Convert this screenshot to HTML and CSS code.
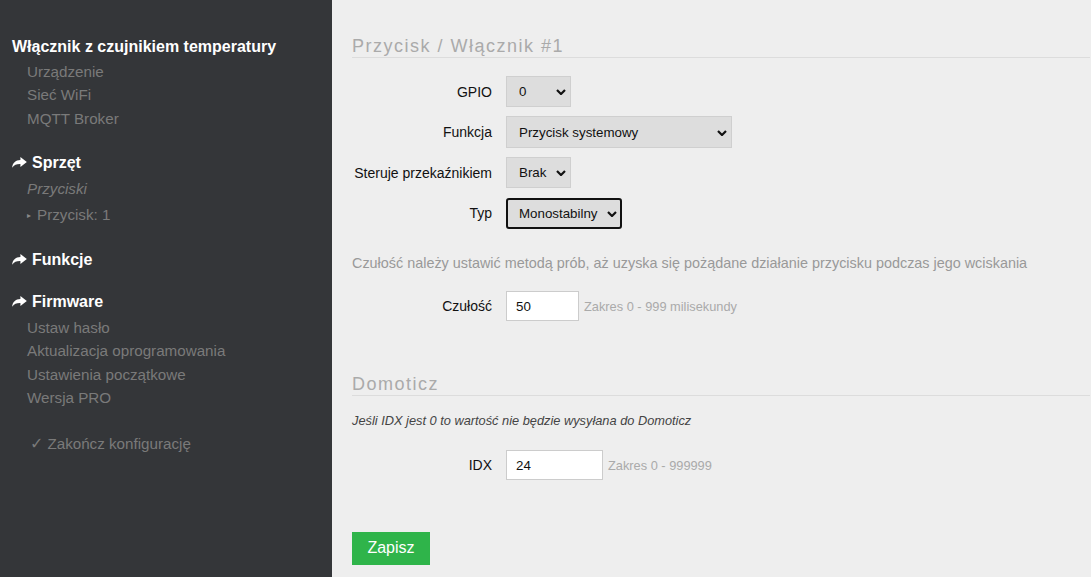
FILE: index.html
```html
<!DOCTYPE html>
<html lang="pl">
<head>
<meta charset="utf-8">
<title>Konfiguracja</title>
<link rel="stylesheet" href="styles.css">
</head>
<body>
<div class="layout">
  <nav class="sidebar">
    <div class="brand">Włącznik z czujnikiem temperatury</div>
    <ul class="items">
      <li>Urządzenie</li>
      <li>Sieć WiFi</li>
      <li>MQTT Broker</li>
    </ul>

    <div class="group"><svg class="ico" viewBox="0 0 16 12"><path d="M9 0 L16 5.5 L9 11 V7.6 C4.8 7.5 2.2 8.6 0 11.8 C0.3 6.6 3.6 3.6 9 3.4 Z" fill="#fff"/></svg>Sprzęt</div>
    <ul class="items">
      <li class="current">Przyciski</li>
      <li class="sub"><span class="tri">&#9656;</span>Przycisk: 1</li>
    </ul>

    <div class="group"><svg class="ico" viewBox="0 0 16 12"><path d="M9 0 L16 5.5 L9 11 V7.6 C4.8 7.5 2.2 8.6 0 11.8 C0.3 6.6 3.6 3.6 9 3.4 Z" fill="#fff"/></svg>Funkcje</div>

    <div class="group"><svg class="ico" viewBox="0 0 16 12"><path d="M9 0 L16 5.5 L9 11 V7.6 C4.8 7.5 2.2 8.6 0 11.8 C0.3 6.6 3.6 3.6 9 3.4 Z" fill="#fff"/></svg>Firmware</div>
    <ul class="items">
      <li>Ustaw hasło</li>
      <li>Aktualizacja oprogramowania</li>
      <li>Ustawienia początkowe</li>
      <li>Wersja PRO</li>
    </ul>

    <div class="finish"><span class="check">&#10003;</span>Zakończ konfigurację</div>
  </nav>

  <main class="content">
    <h2 class="section">Przycisk / Włącznik #1</h2>

    <div class="row first">
      <label class="lbl">GPIO</label>
      <span class="sel w65"><select><option>0</option></select><svg class="chev" viewBox="0 0 10 6"><path d="M1 1 L5 5 L9 1" fill="none" stroke="#111" stroke-width="2.2"/></svg></span>
    </div>
    <div class="row">
      <label class="lbl">Funkcja</label>
      <span class="sel w226"><select><option>Przycisk systemowy</option></select><svg class="chev" viewBox="0 0 10 6"><path d="M1 1 L5 5 L9 1" fill="none" stroke="#111" stroke-width="2.2"/></svg></span>
    </div>
    <div class="row">
      <label class="lbl">Steruje przekaźnikiem</label>
      <span class="sel w65"><select><option>Brak</option></select><svg class="chev" viewBox="0 0 10 6"><path d="M1 1 L5 5 L9 1" fill="none" stroke="#111" stroke-width="2.2"/></svg></span>
    </div>
    <div class="row">
      <label class="lbl">Typ</label>
      <span class="sel w116 focus"><select><option>Monostabilny</option></select><svg class="chev" viewBox="0 0 10 6"><path d="M1 1 L5 5 L9 1" fill="none" stroke="#111" stroke-width="2.2"/></svg></span>
    </div>

    <p class="note">Czułość należy ustawić metodą prób, aż uzyska się pożądane działanie przycisku podczas jego wciskania</p>

    <div class="row">
      <label class="lbl">Czułość</label>
      <input class="txt w73" type="text" value="50">
      <span class="hint">Zakres 0 - 999 milisekundy</span>
    </div>

    <h2 class="section second">Domoticz</h2>
    <p class="info">Jeśli IDX jest 0 to wartość nie będzie wysyłana do Domoticz</p>

    <div class="row">
      <label class="lbl">IDX</label>
      <input class="txt w97" type="text" value="24">
      <span class="hint">Zakres 0 - 999999</span>
    </div>

    <button class="save">Zapisz</button>
  </main>
</div>
</body>
</html>
```

FILE: styles.css
```css
* { box-sizing: border-box; }
html, body {
  margin: 0;
  padding: 0;
  height: 100%;
}
body {
  font-family: "Liberation Sans", Arial, sans-serif;
  background: #eeeeee;
  color: #222;
}
.layout {
  display: grid;
  grid-template-columns: 332px 1fr;
  min-height: 100%;
}
.sidebar {
  background: #343639;
  padding: 37px 0 0 12px;
}
.brand {
  color: #fff;
  font-weight: bold;
  font-size: 16px;
  line-height: 20px;
  margin-bottom: 3px;
}
.items {
  list-style: none;
  margin: 0;
  padding: 0 0 0 15px;
}
.items li {
  color: #7a7a7a;
  font-size: 15.2px;
  line-height: 23.33px;
}
.items li.current {
  font-style: italic;
}
.items li.sub {
  margin-top: 2px;
}
.tri {
  font-size: 8px;
  display: inline-block;
  width: 10px;
  vertical-align: 2px;
  color: #888;
}
.group {
  color: #fff;
  font-weight: bold;
  font-size: 16px;
  line-height: 20px;
  margin-top: 22px;
  margin-bottom: 4px;
  display: flex;
  align-items: center;
}
.items + .group { margin-top: 23.2px; }
.ico {
  width: 15px;
  height: 11px;
  margin-right: 5px;
  margin-top: -1px;
}
.finish {
  color: #7a7a7a;
  font-size: 15.2px;
  line-height: 23.33px;
  margin-top: 23px;
  padding-left: 18px;
}
.check {
  font-family: "DejaVu Sans", sans-serif;
  font-size: 16px;
  margin-right: 4px;
}

.content {
  padding: 35px 1px 10px 20px;
}
.section {
  margin: 0;
  font-weight: normal;
  font-size: 18px;
  line-height: 22px;
  letter-spacing: 1.5px;
  color: #aaaaaa;
  border-bottom: 1px solid #dcdcdc;
}
.section.second {
  margin-top: 51px;
}
.row {
  display: flex;
  align-items: center;
  height: 31px;
  margin-bottom: 9.5px;
}
.row.first { margin-top: 18px; }
.lbl {
  width: 140px;
  text-align: right;
  font-size: 14px;
  color: #111;
  margin-right: 14px;
}
.sel {
  position: relative;
  display: inline-block;
  height: 31px;
}
.sel select {
  appearance: none;
  -webkit-appearance: none;
  width: 100%;
  height: 100%;
  background: #dddddd;
  border: 1px solid #cfcfcf;
  border-radius: 0;
  font-family: "Liberation Sans", Arial, sans-serif;
  font-size: 13.333px;
  color: #111;
  padding: 0 0 0 12px;
  margin: 0;
}
.sel.focus select {
  border: 2px solid #111;
  border-radius: 3px;
  padding-left: 11px;
}
.chev {
  position: absolute;
  right: 5px;
  top: 13px;
  width: 10px;
  height: 6px;
  pointer-events: none;
}
.w65 { width: 65px; }
.w226 { width: 226px; height: 32px; }
.w226 .chev { top: 14px; }
.w116 { width: 116px; }
.note {
  margin: 24px 0 18px;
  font-size: 14.4px;
  line-height: 20px;
  color: #999999;
}
.txt {
  height: 30px;
  border: 1px solid #cccccc;
  background: #fff;
  font-family: "Liberation Sans", Arial, sans-serif;
  font-size: 13.333px;
  color: #111;
  padding: 0 9px;
  margin: 0;
}
.w73 { width: 73px; }
.w97 { width: 97px; }
.hint {
  font-size: 12.8px;
  color: #aaaaaa;
  margin-left: 5px;
}
.info {
  margin: 16px 0 20px;
  font-size: 12.8px;
  line-height: 18px;
  font-style: italic;
  color: #444;
}
.save {
  display: block;
  margin-top: 51px;
  width: 78px;
  height: 33px;
  background: #2fb44a;
  border: none;
  color: #fff;
  font-family: "Liberation Sans", Arial, sans-serif;
  font-size: 16px;
  padding: 0;
}
```
